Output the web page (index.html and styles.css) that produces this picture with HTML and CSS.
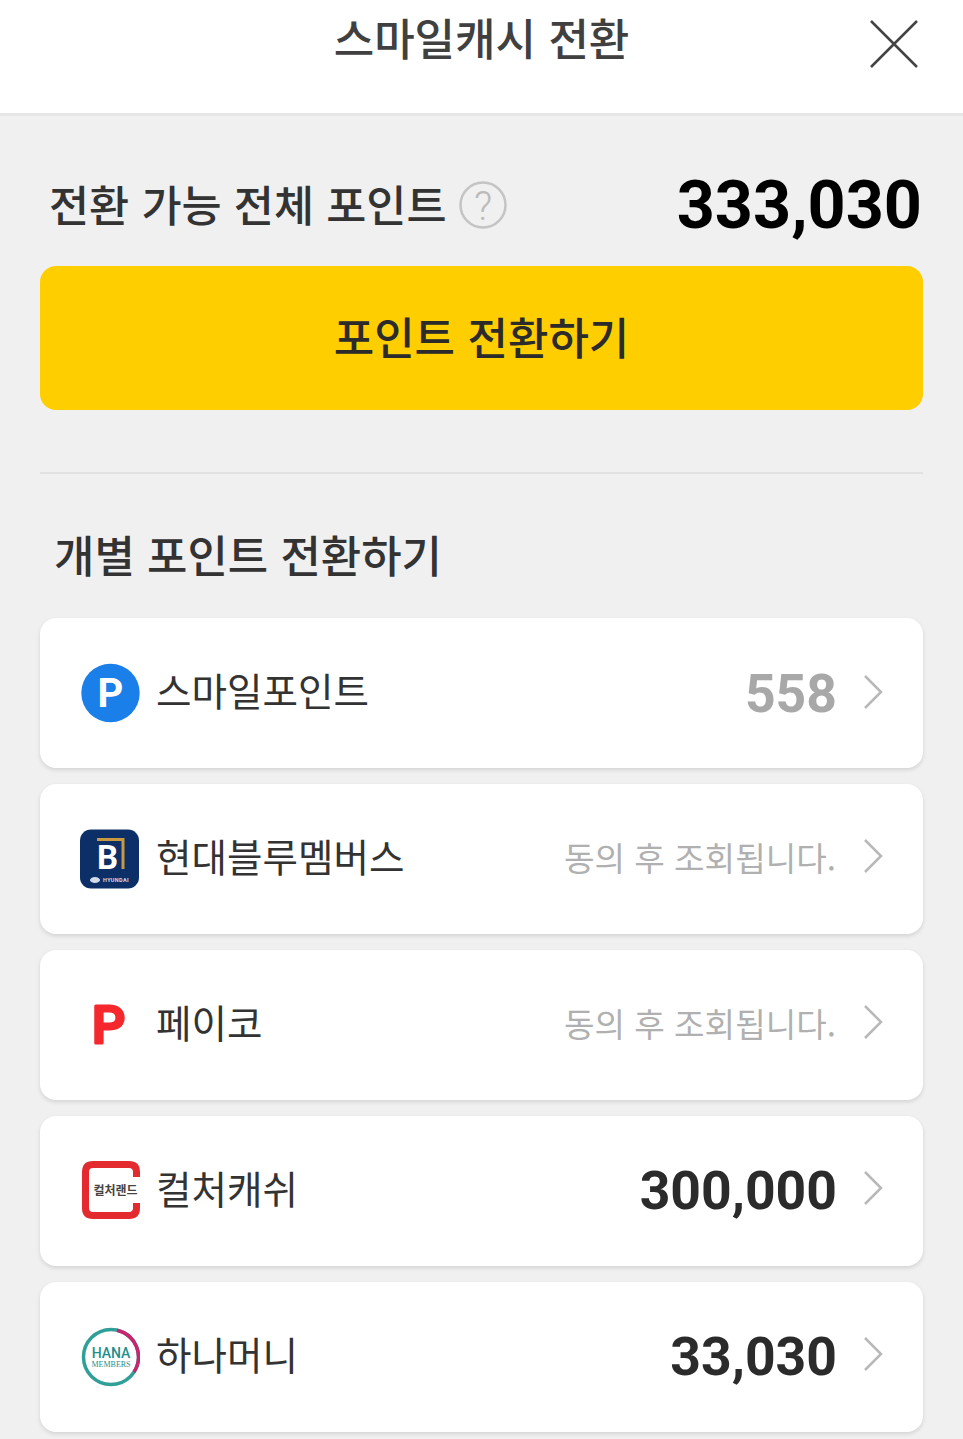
FILE: index.html
```html
<!DOCTYPE html>
<html lang="ko">

<head>
  <meta charset="UTF-8">
  <meta name="viewport" content="width=device-width, initial-scale=1.0">
  <title>스마일캐시 전환</title>
  <link rel="stylesheet" href="styles.css">
</head>

<body>
  <header class="top-bar">
    <span></span>
    <h1 class="top-title">스마일캐시 전환</h1>
    <button class="close-btn" aria-label="닫기">
      <svg width="48" height="48" viewBox="0 0 48 48"><path d="M1 1L47 47M47 1L1 47" /></svg>
    </button>
  </header>

  <main class="content">
    <section class="total-row">
      <div class="total-label">
        <span class="total-text">전환 가능 전체 포인트</span>
        <svg class="help-icon" width="48" height="48" viewBox="0 0 48 48">
          <circle cx="24" cy="24" r="22.5" />
          <text x="24" y="38.5" text-anchor="middle">?</text>
        </svg>
      </div>
      <strong class="total-value">333,030</strong>
    </section>

    <button class="convert-btn"><span class="convert-text">포인트 전환하기</span></button>

    <hr class="divider">

    <h2 class="section-title">개별 포인트 전환하기</h2>

    <ul class="point-list">
      <li class="point-card">
        <svg class="brand" viewBox="0 0 60 60">
          <circle cx="30.5" cy="30" r="29.2" fill="#1a7fe8" />
          <text class="logo-p" x="30.5" y="43.5" text-anchor="middle" fill="#fff">P</text>
        </svg>
        <span class="point-name">스마일포인트</span>
        <span class="point-value muted">558</span>
        <svg class="chevron" width="22" height="36" viewBox="0 0 22 36"><path d="M3 2L19 18L3 34" /></svg>
      </li>

      <li class="point-card">
        <svg class="brand" viewBox="0 0 60 60">
          <rect width="59" height="59" x="0" y="0.5" rx="11" fill="#0b2f66" />
          <path d="M17 10.5H43V40" fill="none" stroke="#c8993f" stroke-width="3" />
          <text class="logo-b" x="27.5" y="40" text-anchor="middle" fill="#fff">B</text>
          <ellipse cx="15" cy="51" rx="5" ry="3" fill="#d5dbe6" />
          <text class="logo-hyundai" x="36" y="53" text-anchor="middle" fill="#d5dbe6">HYUNDAI</text>
        </svg>
        <span class="point-name">현대블루멤버스</span>
        <span class="point-note">동의 후 조회됩니다.</span>
        <svg class="chevron" width="22" height="36" viewBox="0 0 22 36"><path d="M3 2L19 18L3 34" /></svg>
      </li>

      <li class="point-card">
        <svg class="brand" viewBox="0 0 60 60">
          <text class="logo-payco" x="28.5" y="47.5" text-anchor="middle" fill="#f5282d">P</text>
        </svg>
        <span class="point-name">페이코</span>
        <span class="point-note">동의 후 조회됩니다.</span>
        <svg class="chevron" width="22" height="36" viewBox="0 0 22 36"><path d="M3 2L19 18L3 34" /></svg>
      </li>

      <li class="point-card">
        <svg class="brand" viewBox="0 0 60 60">
          <path d="M56.5 16V11Q56.5 3.5 49 3.5H13Q5.5 3.5 5.5 11V47Q5.5 54.5 13 54.5H49Q56.5 54.5 56.5 47V42" fill="none" stroke="#e22a2f" stroke-width="7" />
          <text class="logo-culture" x="35.5" y="33.5" text-anchor="middle" fill="#444">컬처랜드</text>
        </svg>
        <span class="point-name">컬처캐쉬</span>
        <span class="point-value">300,000</span>
        <svg class="chevron" width="22" height="36" viewBox="0 0 22 36"><path d="M3 2L19 18L3 34" /></svg>
      </li>

      <li class="point-card">
        <svg class="brand" viewBox="0 0 60 60">
          <circle cx="31" cy="30" r="27.5" fill="none" stroke="#2f9f98" stroke-width="3.5" />
          <path d="M37 3.2A27.5 27.5 0 0 1 54 45" fill="none" stroke="#c9246f" stroke-width="3.5" />
          <text class="logo-hana" x="31" y="31" text-anchor="middle" fill="#1f8f8c">HANA</text>
          <text class="logo-members" x="31" y="40" text-anchor="middle" fill="#1f8f8c">MEMBERS</text>
        </svg>
        <span class="point-name">하나머니</span>
        <span class="point-value">33,030</span>
        <svg class="chevron" width="22" height="36" viewBox="0 0 22 36"><path d="M3 2L19 18L3 34" /></svg>
      </li>
    </ul>
  </main>
</body>

</html>
```

FILE: styles.css
```css
* {
  box-sizing: border-box;
}

body {
  margin: 0;
  background-color: #f0f0f0;
  font-family: "Noto Sans CJK KR", "Noto Sans", sans-serif;
  color: #333;
}

.top-bar {
  display: grid;
  grid-template-columns: 1fr auto 1fr;
  height: 116px;
  background-color: #fff;
  border-bottom: 3px solid #e6e6e6;
}

.top-title {
  margin: 5px 0 0;
  font-size: 44px;
  line-height: 64px;
  font-weight: 500;
  color: #404040;
}

.close-btn {
  justify-self: end;
  align-self: start;
  width: 48px;
  height: 48px;
  margin: 20px 45px 0 0;
  padding: 0;
  border: none;
  background: none;
}

.close-btn svg {
  display: block;
  fill: none;
  stroke: #444;
  stroke-width: 2.5;
}

.content {
  padding: 0 40px 8px;
}

.total-row {
  display: flex;
  justify-content: space-between;
  align-items: center;
  height: 150px;
  padding: 28px 1px 0 9px;
}

.total-label {
  display: flex;
  align-items: center;
  gap: 12px;
  font-size: 43.6px;
  font-weight: 500;
  line-height: 64px;
}

.total-text {
  margin-bottom: 4px;
}

.help-icon circle {
  fill: none;
  stroke: #c4c4c4;
  stroke-width: 2.5;
}

.help-icon text {
  font-family: "Roboto", sans-serif;
  font-size: 40px;
  font-weight: 300;
  fill: #bbb;
}

.total-value {
  font-family: "Roboto", sans-serif;
  font-size: 66.5px;
  font-weight: 700;
  line-height: 76px;
  color: #000;
}

.convert-btn {
  display: block;
  width: 100%;
  height: 144px;
  border: none;
  border-radius: 16px;
  background-color: #ffce00;
  font-family: inherit;
  font-size: 44px;
  font-weight: 500;
  color: #2b2b2b;
}

.convert-text {
  display: block;
  margin-bottom: 4px;
}

.divider {
  height: 2px;
  margin: 62px 0 0;
  border: none;
  background-color: #e2e2e2;
}

.section-title {
  margin: 48px 0 32px 14px;
  font-size: 43.9px;
  line-height: 64px;
  font-weight: 500;
  color: #333;
}

.point-list {
  display: flex;
  flex-direction: column;
  gap: 16px;
  margin: 0;
  padding: 0;
  list-style: none;
}

.point-card {
  display: flex;
  align-items: center;
  height: 150px;
  padding: 0 39px 0 40px;
  background-color: #fff;
  border-radius: 16px;
  box-shadow: 0 2px 4px rgba(0, 0, 0, 0.12);
}

.brand {
  flex: none;
  width: 60px;
  height: 60px;
}

.point-name {
  flex: 1;
  margin: 0 0 8px 16px;
  font-size: 38.6px;
  color: #333;
}

.point-value {
  margin: 0 -1px 2px 0;
  font-family: "Roboto", sans-serif;
  font-size: 53.5px;
  font-weight: 700;
  color: #2b2b2b;
}

.point-value.muted {
  margin-bottom: 0;
  color: #a8a8a8;
}

.point-note {
  margin-bottom: 6px;
  font-size: 33.2px;
  color: #b0b0b0;
}

.chevron {
  flex: none;
  margin: 0 0 6px 26px;
  fill: none;
  stroke: #b8b8b8;
  stroke-width: 2.5;
}

.point-card:first-child .chevron {
  margin-bottom: 2px;
}

.logo-p {
  font-family: "Roboto", sans-serif;
  font-size: 40px;
  font-weight: 700;
}

.logo-b {
  font-family: "Roboto", sans-serif;
  font-size: 33px;
  font-weight: 700;
}

.logo-hyundai {
  font-family: "Roboto", sans-serif;
  font-size: 5.5px;
  font-weight: 700;
  letter-spacing: 0.4px;
}

.logo-payco {
  font-family: "Roboto", sans-serif;
  font-size: 52px;
  font-weight: 500;
  stroke: #f5282d;
  stroke-width: 3;
  stroke-linejoin: round;
}

.logo-culture {
  font-size: 12px;
  font-weight: 700;
}

.logo-hana {
  font-family: "Roboto", sans-serif;
  font-size: 14px;
  font-weight: 500;
}

.logo-members {
  font-family: "Liberation Serif", serif;
  font-size: 8px;
}
```
